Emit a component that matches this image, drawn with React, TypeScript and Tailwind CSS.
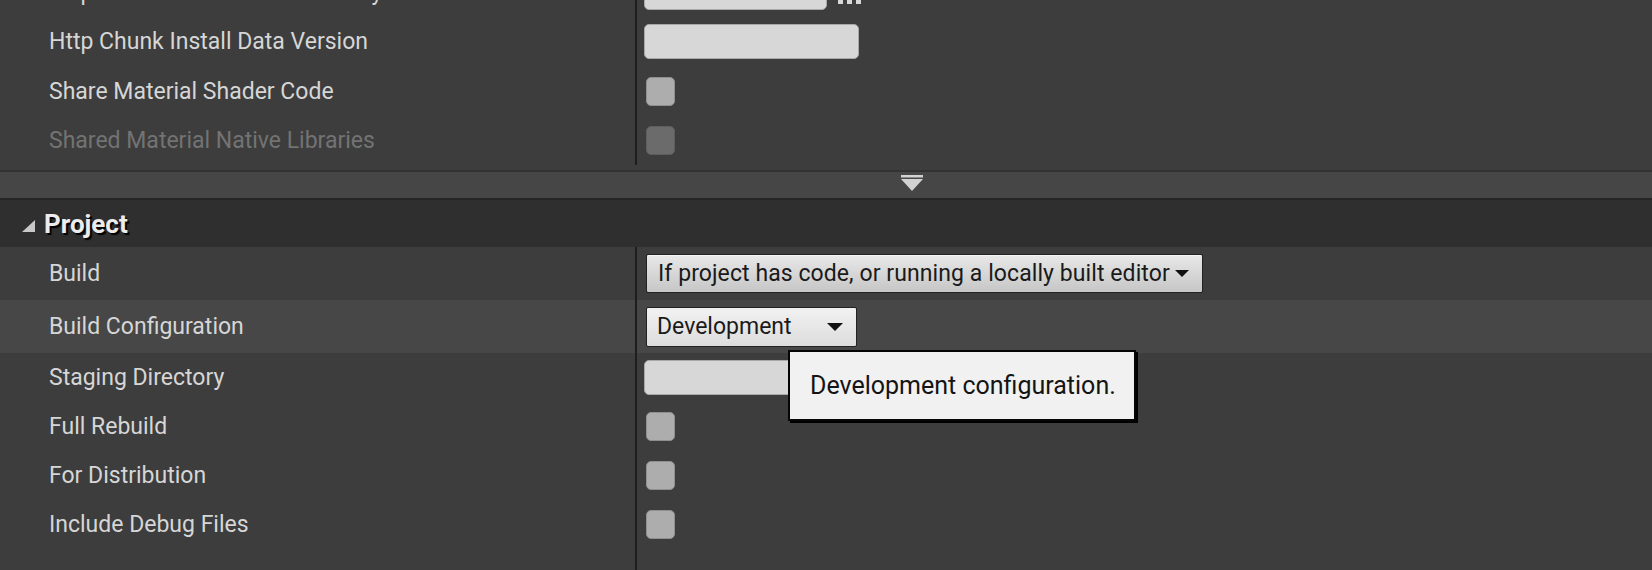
import React from "react";

function Arrow({ w = 14, h = 7 }: { w?: number; h?: number }) {
  return (
    <svg width={w} height={h} viewBox={`0 0 ${w} ${h}`} className="shrink-0">
      <polygon points={`0,0 ${w},0 ${w / 2},${h}`} fill="#111" />
    </svg>
  );
}

function Row({
  label,
  hClass,
  highlight,
  disabled,
  children,
}: {
  label: string;
  hClass: string;
  highlight?: boolean;
  disabled?: boolean;
  children?: React.ReactNode;
}) {
  return (
    <div className={`flex shrink-0 ${hClass} ${highlight ? "bg-[#474747]" : "bg-[#3d3d3d]"}`}>
      <div className="flex w-[637px] shrink-0 items-center border-r-2 border-[#1e1e1e] pl-[49px]">
        <span
          className={`whitespace-nowrap text-[23px] leading-none ${
            disabled ? "text-[#737373]" : "text-[#d6d6d6]"
          }`}
        >
          {label}
        </span>
      </div>
      <div className="flex flex-1 items-center">{children}</div>
    </div>
  );
}

function TextField({ wClass }: { wClass: string }) {
  return <div className={`ml-[7px] h-[35px] ${wClass} rounded-[5px] border border-[#a8a8a8] bg-[#d7d7d7]`} />;
}

function Checkbox({ disabled }: { disabled?: boolean }) {
  return (
    <div
      className={`ml-[9px] h-[29px] w-[29px] rounded-[5px] border ${
        disabled ? "border-[#5e5e5e] bg-[#6b6b6b]" : "border-[#8f8f8f] bg-[#adadad]"
      }`}
    />
  );
}

export default function App() {
  return (
    <div className="relative flex h-[570px] w-[1652px] flex-col overflow-hidden bg-[#3d3d3d] font-[Roboto,sans-serif]">
      {/* upper (scrolled) section */}
      <div className="-mt-[32px] flex flex-col">
        <Row label="Http Chunk Install Data Directory" hClass="h-[49px]">
          <TextField wClass="w-[183px]" />
          <div className="ml-[11px] mt-[17px] flex gap-[4px]">
            <div className="h-[5px] w-[5px] bg-[#d8d8d8]" />
            <div className="h-[5px] w-[5px] bg-[#d8d8d8]" />
            <div className="h-[5px] w-[5px] bg-[#d8d8d8]" />
          </div>
        </Row>
        <Row label="Http Chunk Install Data Version" hClass="h-[49px]">
          <TextField wClass="w-[215px]" />
        </Row>
        <Row label="Share Material Shader Code" hClass="h-[50px]">
          <Checkbox />
        </Row>
        <Row label="Shared Material Native Libraries" hClass="h-[49px]" disabled>
          <Checkbox disabled />
        </Row>
      </div>
      <div className="h-[5px] shrink-0 bg-[#3d3d3d]" />
      {/* splitter */}
      <div className="h-[2px] shrink-0 bg-[#323232]" />
      <div className="flex h-[26px] shrink-0 items-start bg-[#464646] pl-[901px] pt-[3px]">
        <svg width="22" height="16" viewBox="0 0 22 16">
          <rect x="0" y="0" width="22" height="2.5" fill="#d2d2d2" />
          <polygon points="0,4 22,4 11,16" fill="#d2d2d2" />
        </svg>
      </div>
      <div className="h-[2px] shrink-0 bg-[#262626]" />
      {/* category header */}
      <div className="flex h-[47px] shrink-0 items-center bg-[#2f2f2f]">
        <svg width="13" height="12" viewBox="0 0 13 12" className="ml-[22px] mt-[5px]">
          <polygon points="13,0 13,12 0,12" fill="#c8c8c8" />
        </svg>
        <span className="ml-[9px] text-[26px] font-bold leading-none text-[#ececec] [text-shadow:2px_2px_1px_#000]">
          Project
        </span>
      </div>
      {/* properties */}
      <Row label="Build" hClass="h-[53px]">
        <div className="ml-[9px] flex h-[39px] items-center rounded-[2px] border border-[#222] bg-[linear-gradient(#e8e8e8,#c6c6c6)] pl-[11px] pr-[13px] shadow-[inset_0_1px_0_#f4f4f4]">
          <span className="whitespace-nowrap text-[23px] tracking-[0.08px] leading-none text-[#1a1a1a]">
            If project has code, or running a locally built editor
          </span>
          <span className="ml-[5px] flex">
            <Arrow w={14} h={7} />
          </span>
        </div>
      </Row>
      <Row label="Build Configuration" hClass="h-[53px]" highlight>
        <div className="ml-[9px] flex h-[40px] w-[211px] items-center justify-between rounded-[2px] border border-[#222] bg-[linear-gradient(#f2f2f2,#dcdcdc)] pl-[10px] pr-[13px]">
          <span className="whitespace-nowrap text-[23px] leading-none text-[#1a1a1a]">Development</span>
          <Arrow w={16} h={8} />
        </div>
      </Row>
      <Row label="Staging Directory" hClass="h-[49px]">
        <TextField wClass="w-[215px]" />
      </Row>
      <Row label="Full Rebuild" hClass="h-[49px]">
        <Checkbox />
      </Row>
      <Row label="For Distribution" hClass="h-[49px]">
        <Checkbox />
      </Row>
      <Row label="Include Debug Files" hClass="h-[49px]">
        <Checkbox />
      </Row>
      <div className="flex flex-1">
        <div className="w-[637px] border-r-2 border-[#1e1e1e]" />
      </div>

      {/* tooltip */}
      <div className="absolute left-[788px] top-[350px] flex h-[71px] w-[348px] items-center border-2 border-[#050505] bg-[#f1f1f1] pl-[20px] shadow-[2px_2px_0_#000]">
        <span className="whitespace-nowrap text-[25px] leading-none text-[#141414]">Development configuration.</span>
      </div>
    </div>
  );
}
